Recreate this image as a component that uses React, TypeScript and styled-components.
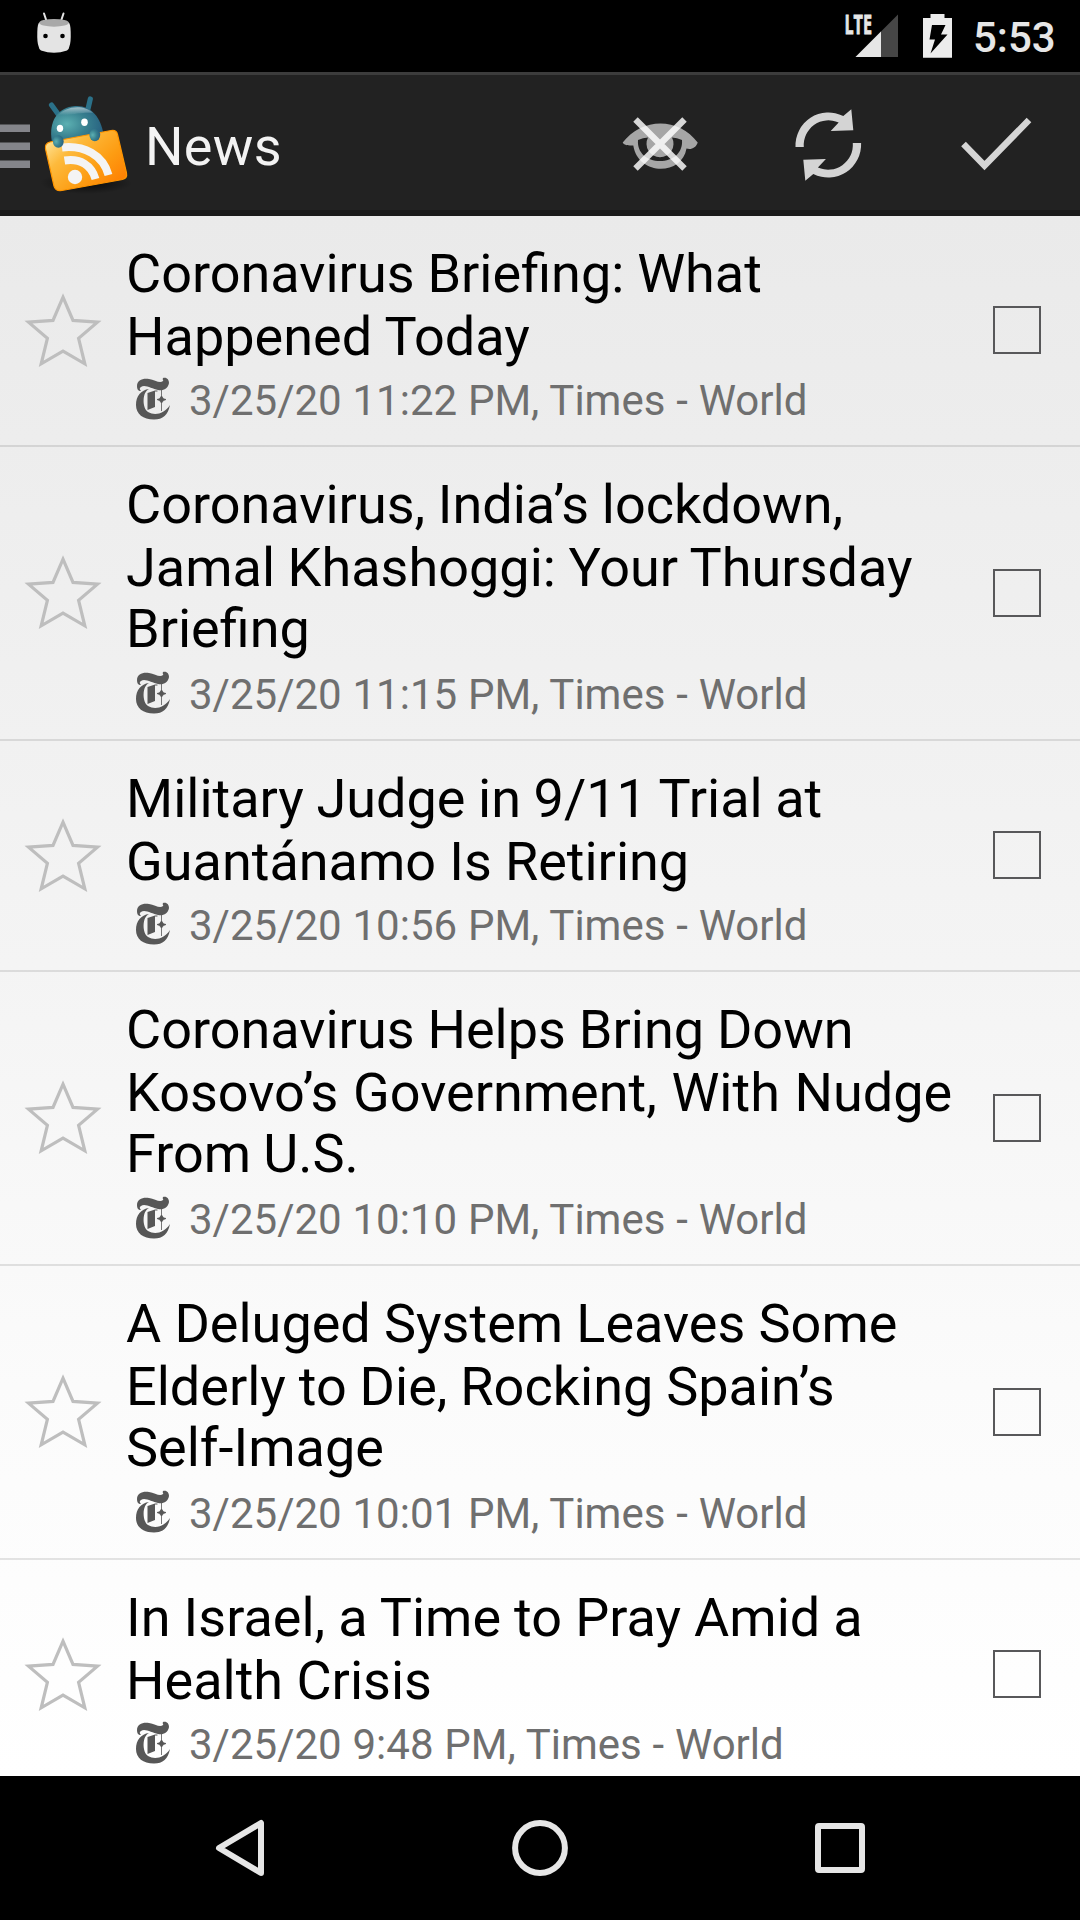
import React from 'react';
import styled, { createGlobalStyle } from 'styled-components';

const Global = createGlobalStyle`
  * { box-sizing: border-box; }
  body { margin: 0; background: #000; font-family: Roboto, "Noto Sans", sans-serif; }
`;

const Screen = styled.div`
  width: 1080px;
  height: 1920px;
  display: flex;
  flex-direction: column;
  overflow: hidden;
  background: #000;
`;

const StatusBar = styled.header`
  height: 72px;
  flex: none;
  display: flex;
  align-items: flex-start;
  background: #000;
`;

const Spacer = styled.div`
  flex: 1;
`;

const Icon = styled.svg<{ $w: number; $h: number; $ml?: number }>`
  display: block;
  flex: none;
  width: ${(p) => p.$w}px;
  height: ${(p) => p.$h}px;
  margin-left: ${(p) => p.$ml ?? 0}px;
`;

const Carrier = styled.text`
  font: 700 26px "Open Sans", sans-serif;
`;

const Clock = styled.time`
  width: 107px;
  margin: 0 0 0 20px;
  line-height: 75px;
  font-size: 42px;
  font-weight: 500;
  color: #e6e6e6;
`;

const ActionBar = styled.nav`
  height: 144px;
  flex: none;
  display: flex;
  align-items: center;
  padding-right: 44px;
  background: #222;
  border-top: 3px solid #3c3c3c;
  border-bottom: 6px solid #1a1a1a;
`;

const ScreenTitle = styled.h1`
  margin: 8px 0 0 14px;
  font-size: 54px;
  line-height: 64px;
  letter-spacing: 0.3px;
  font-weight: 400;
  color: #f3f3f3;
`;

const Feed = styled.ul`
  flex: 1;
  min-height: 0;
  margin: 0;
  padding: 0;
  list-style: none;
  overflow: hidden;
  background: linear-gradient(#eaeaea, #f4f4f4 48%, #fbfbfb 75%, #fff);
`;

const Row = styled.li`
  display: flex;
  align-items: center;
  border-bottom: 2px solid rgba(0, 0, 0, 0.1);
`;

const Story = styled.div`
  flex: 1;
  padding: 26px 0 16px 24px;
`;

const Headline = styled.h2`
  margin: 0;
  font-size: 54px;
  font-weight: 400;
  color: #000;
`;

const Line = styled.span<{ $space: number }>`
  display: block;
  line-height: 63px;
  white-space: nowrap;
  word-spacing: ${(p) => p.$space}px;

  &:nth-child(3) {
    line-height: 59px;
    padding-bottom: 4px;
  }
`;

const Meta = styled.div`
  display: flex;
  align-items: center;
  height: 61px;
  gap: 18px;
  font-size: 42px;
  white-space: nowrap;
  color: #6f6f6f;
`;

const Source = styled.span`
  margin-top: 4px;
  word-spacing: 0.4px;
`;

const Checkbox = styled.span`
  flex: none;
  width: 48px;
  height: 48px;
  margin: 0 39px 1px 0;
  border: 2px solid #58585a;
`;

const NavBar = styled.footer`
  height: 144px;
  flex: none;
  display: flex;
  align-items: center;
  justify-content: center;
  gap: 244px;
  background: #000;
`;

type HeadlineLine = [text: string, space: number];

const stories: { lines: HeadlineLine[]; time: string }[] = [
  { lines: [['Coronavirus Briefing: What', -0.5], ['Happened Today', 0]], time: '11:22 PM' },
  { lines: [['Coronavirus, India’s lockdown,', -0.8], ['Jamal Khashoggi: Your Thursday', -0.8], ['Briefing', 0]], time: '11:15 PM' },
  { lines: [['Military Judge in 9/11 Trial at', -0.8], ['Guantánamo Is Retiring', -0.3]], time: '10:56 PM' },
  { lines: [['Coronavirus Helps Bring Down', -0.5], ['Kosovo’s Government, With Nudge', 1.2], ['From U.S.', -1.2]], time: '10:10 PM' },
  { lines: [['A Deluged System Leaves Some', -0.2], ['Elderly to Die, Rocking Spain’s', -0.5], ['Self-Image', 0]], time: '10:01 PM' },
  { lines: [['In Israel, a Time to Pray Amid a', -0.3], ['Health Crisis', 0]], time: '9:48 PM' },
];

const DroidHead = () => (
  <Icon $w={40} $h={60} $ml={34} viewBox="34 0 40 60">
    <path d="M44 13.5l3 9M63.500 13.500l-3 9" stroke="#e4e4e4" strokeWidth="2" strokeLinecap="round" />
    <path d="M39.500 22.500Q37.500 23 37.300 32Q37 42 38.500 46Q39 49.500 41 50.500Q54 55 67 50.500Q69 49.500 69.500 46Q71 42 70.700 32Q70.500 23 68.500 22.500Z" fill="#e4e4e4" />
    <ellipse cx="54" cy="22.800" rx="14.800" ry="3.900" fill="#a9a9a9" />
    <circle cx="45.500" cy="36" r="2.300" />
    <circle cx="62.500" cy="36" r="2.300" />
  </Icon>
);

const Signal = () => (
  <Icon $w={60} $h={60} viewBox="842 0 60 60">
    <path d="M898 14.500V57H855.500Z" fill="#464646" />
    <path d="M881 31.500V57H855.500Z" fill="#e6e6e6" />
    <Carrier x="844.500" y="33.500" textLength="27.500" lengthAdjust="spacingAndGlyphs" fill="#e6e6e6" stroke="#e6e6e6" strokeWidth=".8">LTE</Carrier>
  </Icon>
);

const Battery = () => (
  <Icon $w={30} $h={60} $ml={21} viewBox="923 0 30 60">
    <path d="M930.500 14H944.500V18H952V57.700H923V18H930.500Z" fill="#ececec" />
    <path d="M932 25H945.500L941 34.500H947.500L930.500 53.500L935 39.500H929.500Z" />
  </Icon>
);

const Menu = () => (
  <Icon $w={30} $h={135} viewBox="0 75 30 135">
    <path d="M0 124.500h30v7.500H0zM0 142.500h30v7.500H0zM0 160.500h30v7.500H0z" fill="#84858a" />
  </Icon>
);

const AppLogo = () => (
  <Icon $w={100} $h={135} $ml={1} viewBox="31 75 100 135">
    <defs>
      <radialGradient id="droid" cx=".3" cy=".5" r=".75">
        <stop offset="0" stopColor="#5cb0b2" />
        <stop offset=".5" stopColor="#38808f" />
        <stop offset="1" stopColor="#255d7f" />
      </radialGradient>
      <linearGradient id="folder" x1="0" y1=".1" x2="1" y2=".9">
        <stop offset="0" stopColor="#ffeaa6" />
        <stop offset=".3" stopColor="#fdba3c" />
        <stop offset=".65" stopColor="#fd9c12" />
        <stop offset="1" stopColor="#ff7a00" />
      </linearGradient>
      <linearGradient id="shine" x1="0" y1="0" x2="0" y2="1">
        <stop offset="0" stopColor="#fff" stopOpacity=".55" />
        <stop offset=".8" stopColor="#fff" stopOpacity="0" />
      </linearGradient>
      <radialGradient id="shade">
        <stop offset="0" stopColor="#000" stopOpacity=".7" />
        <stop offset="1" stopColor="#000" stopOpacity="0" />
      </radialGradient>
    </defs>
    <ellipse cx="86" cy="183" rx="46" ry="11" fill="url(#shade)" />
    <path d="M51.500 105L58 114" stroke="#2b7189" strokeWidth="5.200" strokeLinecap="round" />
    <path d="M90.300 99L88 109" stroke="#2b7189" strokeWidth="5.200" strokeLinecap="round" />
    <path d="M52 142C48 121 58 107.500 75 106C91 105 100.500 117 103.500 134Z" fill="url(#droid)" />
    <path d="M57 117C64 106 84 104 93 113C84 112 68 115 57 117Z" fill="url(#shine)" />
    <ellipse cx="60" cy="128.300" rx="3.200" ry="3.600" fill="#fff" />
    <ellipse cx="84.500" cy="122.300" rx="3.300" ry="3.700" fill="#fff" />
    <path d="M50 142L111 130.500Q116.500 129.500 117.500 134.500L126.500 173Q127.500 178 122.500 179.500L62 190.500Q55.500 191.500 54 186L45.500 149Q44.500 143.500 50 142Z" fill="url(#folder)" stroke="#ff9500" strokeWidth="1.200" />
    <circle cx="75" cy="177" r="7.200" fill="#f4f4f4" />
    <path d="M64.500 160.500C80 158 91.500 165 95.500 179" fill="none" stroke="#f4f4f4" strokeWidth="8" />
    <path d="M62 147.500C84 145 103 155 108.500 175" fill="none" stroke="#f4f4f4" strokeWidth="8" />
    <ellipse cx="58.300" cy="141.500" rx="5.400" ry="6.200" fill="url(#droid)" />
    <ellipse cx="94.800" cy="135" rx="5.400" ry="6.200" fill="url(#droid)" />
  </Icon>
);

const HideRead = () => (
  <Icon $w={80} $h={135} viewBox="620 75 80 135">
    <path fillRule="evenodd" d="M622.700 142.500C642 117 679 117 697.700 142.500C696 148 691 150 686.500 148.500C682 176 638 176 633.300 145.500C629 145.500 624 145.500 622.700 142.500ZM638 140Q643 137.500 648 137.500A13.500 13.500 0 1 0 672 137.500Q677 137.500 682 140C683 153 673 161 660 161C647 161 637 153 638 140Z" fill="#a6a6a6" />
    <path d="M635.500 119.500L684.500 168.500M684.500 119.500L635.500 168.500" stroke="#fff" strokeOpacity=".82" strokeWidth="6.300" />
  </Icon>
);

const turn = 'M795.500 147A33 33 0 0 1 843.300 116L851.300 109.300L853.300 130.300L830.700 131L838.700 122.500A24.800 24.800 0 0 0 803.800 147Z';

const Refresh = () => (
  <Icon $w={76} $h={135} $ml={89} viewBox="789 75 76 135">
    <g fill="#d4d4d4">
      <path d={turn} />
      <path d={turn} transform="rotate(180 828.300 145)" />
    </g>
  </Icon>
);

const Check = () => (
  <Icon $w={80} $h={135} $ml={91} viewBox="956 75 80 135">
    <path d="M963.500 144L984.500 165.500L1029 120" fill="none" stroke="#d5d5d5" strokeWidth="6.500" />
  </Icon>
);

const Star = () => (
  <Icon $w={78} $h={78} $ml={24} viewBox="0 0 78 78">
    <path d="M39 5.200L49 28.400L73.500 30.100L54.600 46.400L60.800 71.800L39 59.100L17.200 71.800L23.400 46.400L4.500 30.100L29 28.400Z" fill="none" stroke="#bebebe" strokeWidth="3.200" />
  </Icon>
);

const TimesLogo = () => (
  <Icon $w={36} $h={44} $ml={9} viewBox="0 0 36 44">
    <g fill="#575757">
      <path d="M2 9C2 3 8 1 14 2C20 3 25 7 28 4C29 3 27 3 28 1C32 0 34 3 34 6C33 12 28 14 23 13C17 12 10 7 6 10C4 11 5 13 6 14C3 14 2 12 2 9Z" />
      <path d="M14 12C7 15 7 31 13 35C20 39 29 37 35 28C33 38 28 42.500 19 42.500C8 42.500 1 37 1 28C1 19 6 13 14 12Z" />
      <path d="M12.500 16L20 13.500V30L12.500 33Z" />
      <path d="M22 22.500L24.500 21.800L26.500 19L28.500 21.800L31 22.500L28.500 23.500L26.500 26L24.500 23.500Z" stroke="#575757" strokeWidth=".8" />
      <path d="M26.100 13h.8v21h-.8zM20 13.500h2.500v1h-2.500z" />
    </g>
  </Icon>
);

export default function App() {
  return (
    <Screen>
      <Global />
      <StatusBar>
        <DroidHead />
        <Spacer />
        <Signal />
        <Battery />
        <Clock>5:53</Clock>
      </StatusBar>
      <ActionBar>
        <Menu />
        <AppLogo />
        <ScreenTitle>News</ScreenTitle>
        <Spacer />
        <HideRead />
        <Refresh />
        <Check />
      </ActionBar>
      <Feed>
        {stories.map((s) => (
          <Row key={s.time}>
            <Star />
            <Story>
              <Headline>
                {s.lines.map(([text, space]) => (
                  <Line key={text} $space={space}>{text}</Line>
                ))}
              </Headline>
              <Meta>
                <TimesLogo />
                <Source>3/25/20 {s.time}, Times - World</Source>
              </Meta>
            </Story>
            <Checkbox />
          </Row>
        ))}
      </Feed>
      <NavBar>
        <Icon $w={56} $h={60} viewBox="212 1818 56 60">
          <path d="M261 1823V1873L219 1848Z" fill="none" stroke="#e6e6e6" strokeWidth="6" strokeLinejoin="round" />
        </Icon>
        <Icon $w={56} $h={60} viewBox="512 1818 56 60">
          <circle cx="540" cy="1848" r="24.900" fill="none" stroke="#e6e6e6" strokeWidth="6" />
        </Icon>
        <Icon $w={56} $h={60} viewBox="812 1818 56 60">
          <rect x="818" y="1826" width="44" height="44" rx="1" fill="none" stroke="#e6e6e6" strokeWidth="6" />
        </Icon>
      </NavBar>
    </Screen>
  );
}
